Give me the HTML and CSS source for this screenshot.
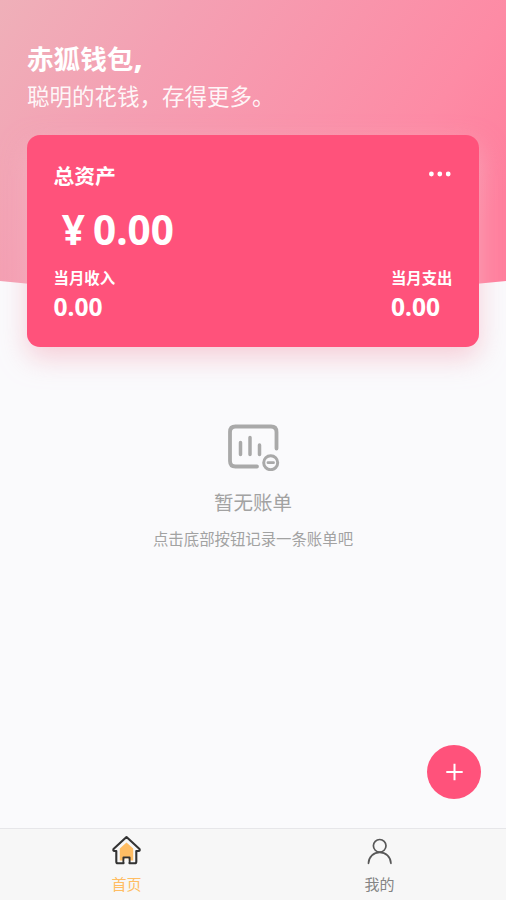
FILE: index.html
```html
<!DOCTYPE html>
<html lang="zh-CN">
<head>
<meta charset="utf-8">
<meta name="viewport" content="width=device-width, initial-scale=1">
<title>赤狐钱包</title>
<link rel="stylesheet" href="styles.css">
</head>
<body>
<main class="content">
  <svg class="backdrop" viewBox="0 0 506 296" preserveAspectRatio="none" aria-hidden="true">
    <defs>
      <linearGradient id="pink" gradientUnits="userSpaceOnUse" x1="0" y1="0" x2="430" y2="300">
        <stop offset="0" stop-color="#efb0b9"/>
        <stop offset=".3" stop-color="#f4a0b3"/>
        <stop offset=".8" stop-color="#fd8ba5"/>
        <stop offset="1" stop-color="#ff7f9d"/>
      </linearGradient>
    </defs>
    <path d="M0 0H506V281Q253 309 0 281Z" fill="url(#pink)"/>
  </svg>
  <header class="greeting">
    <h1 class="greeting-title">赤狐钱包<span class="comma">,</span></h1>
    <p class="greeting-text">聪明的花钱，存得更多。</p>
  </header>
  <section class="card">
    <div class="card-head">
      <h2 class="card-title">总资产</h2>
      <svg class="more" width="24" height="8" viewBox="0 0 24 8" fill="#fff"><circle cx="2.400" cy="4" r="2.400"/><circle cx="10.800" cy="4" r="2.400"/><circle cx="19.200" cy="4" r="2.400"/></svg>
    </div>
    <div class="total"><span class="currency">¥</span>0.00</div>
    <div class="stats">
      <div class="stat"><div class="stat-label">当月收入</div><div class="stat-value">0.00</div></div>
      <div class="stat"><div class="stat-label">当月支出</div><div class="stat-value">0.00</div></div>
    </div>
  </section>
  <section class="empty">
    <svg width="54" height="50" viewBox="0 0 54 50" fill="none" stroke="#a9a9a9" stroke-width="3.800" stroke-linecap="round">
      <path d="M31 45.500H9.500Q4 45.500 4 40V11Q4 5.500 9.500 5.500H45Q50.500 5.500 50.500 11V27.500"/>
      <path d="M14.500 21.500V33.500M24 16.500V33.500M33.500 24V33.500" stroke-width="3.500"/>
      <circle cx="44.700" cy="41.700" r="7" stroke-width="3"/>
      <path d="M42 41.700H47.500" stroke-width="2.800"/>
    </svg>
    <h3 class="empty-title">暂无账单</h3>
    <p class="empty-text">点击底部按钮记录一条账单吧</p>
  </section>
  <button class="add" aria-label="记一笔">
    <svg width="20" height="20" viewBox="0 0 20 20" stroke="#fff" stroke-width="2"><path d="M10.500 1.800V18.200M2.300 10H18.700"/></svg>
  </button>
</main>
<nav class="tabs">
  <a class="tab tab-active">
    <svg width="32" height="32" viewBox="0 0 32 32" stroke-linejoin="round" stroke-linecap="round">
      <path d="M15.500 7.500L8.800 13.500V25.500H22.200V13.500Z" fill="#ffbd63"/>
      <path d="M15.500 2L2.500 14Q1.800 16 3.500 16H5.300V26.800Q5.300 28.300 6.800 28.300H12.500V22.500H18.500V28.300H23.800Q25.300 28.300 25.300 26.800V16H27.500Q29.300 16 28.500 14Z" fill="none" stroke="#333" stroke-width="2.100"/>
      <path d="M13.500 27.200V23.500H17.500V27.200Z" fill="#f7f7f7"/>
    </svg>
    <span>首页</span>
  </a>
  <a class="tab">
    <svg width="32" height="32" viewBox="0 0 32 32" fill="none" stroke="#585858" stroke-width="1.700" stroke-linecap="round"><circle cx="15.700" cy="10.800" r="6.300"/><path d="M4.500 28.300C4.700 21.800 9.700 17.300 15.700 17.300S26.700 21.800 26.900 28.300"/></svg>
    <span>我的</span>
  </a>
</nav>
</body>
</html>
```
FILE: styles.css
```css
* { box-sizing: border-box; margin: 0; padding: 0; }
body {
  height: 900px;
  display: flex;
  flex-direction: column;
  overflow: hidden;
  background: #fafafc;
  color: #fff;
  font-family: "Noto Sans CJK SC", sans-serif;
}
.content { position: relative; flex: 1; padding: 39px 27px 0; }
.backdrop { position: absolute; inset: 0 0 auto; width: 100%; height: 296px; z-index: -1; }
.greeting { height: 96px; }
.greeting-title { font-size: 26.6px; line-height: 38px; font-weight: 700; }
.comma { font-family: "Noto Sans", sans-serif; font-size: 33px; line-height: 1; }
.greeting-text { font-size: 22.5px; line-height: 36px; font-weight: 400; color: rgba(255, 255, 255, .93); }
.card {
  height: 212px;
  padding: 26px 26.5px 0;
  border-radius: 13px;
  background: #ff527b;
  box-shadow: 0 11px 27px rgba(244, 183, 197, .65);
}
.card-head { display: flex; justify-content: space-between; height: 29px; }
.card-title { font-size: 20.8px; line-height: 28px; font-weight: 700; }
.more { margin-top: 9px; }
.total { font-family: "Noto Sans", sans-serif; font-size: 40.5px; line-height: 56px; margin-top: 12px; font-weight: 700; }
.currency { display: inline-block; width: 39.5px; text-align: center; }
.stats { display: flex; justify-content: space-between; margin-top: 8px; }
.stat-label { font-size: 15.4px; line-height: 22px; font-weight: 700; }
.stat-value { font-family: "Noto Sans", sans-serif; font-size: 24.6px; line-height: 37px; font-weight: 700; }
.empty { display: flex; flex-direction: column; align-items: center; padding-top: 74px; color: #a2a2a2; }
.empty-title { margin-top: 17px; font-size: 19.5px; line-height: 28px; font-weight: 400; }
.empty-text { margin-top: 11px; font-size: 15.4px; line-height: 22px; }
.add {
  position: absolute;
  right: 25px;
  bottom: 29px;
  width: 54px;
  height: 54px;
  display: grid;
  place-items: center;
  border: 0;
  border-radius: 50%;
  background: #ff527b;
}
.tabs { display: flex; height: 72px; background: #f7f7f7; border-top: 1px solid #e6e6e9; }
.tab { flex: 1; display: flex; flex-direction: column; align-items: center; padding-top: 6px; font-size: 15px; line-height: 22px; color: #848484; }
.tab span { margin-top: 6px; }
.tab-active { color: #ffbd63; }
```
